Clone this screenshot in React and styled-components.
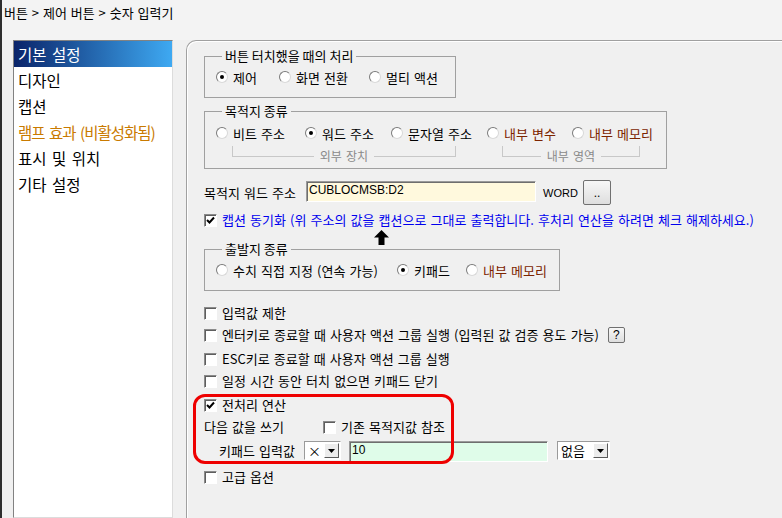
import React from 'react'
import styled, { createGlobalStyle } from 'styled-components'

const GlobalStyle = createGlobalStyle`
  html, body {
    margin: 0;
    padding: 0;
    background: #f0f0f0;
  }
  body {
    font-family: "Noto Sans CJK KR", "Noto Sans", sans-serif;
  }
`

const Window = styled.div`
  width: 782px;
  height: 518px;
  overflow: hidden;
  display: flex;
  flex-direction: column;
  box-sizing: border-box;
  border-left: 2px solid #2e2e2e;
  background: #f0f0f0;
  color: #000;
  font-family: "Noto Sans CJK KR", "Noto Sans", sans-serif;
  font-size: 12px;
  word-spacing: 1.5px;
`

const TopBar = styled.div`
  flex: none;
  height: 40px;
  box-sizing: border-box;
  padding: 4px 0 0 2px;
  background: #f3f3f3;
  font-size: 13px;
  line-height: 17px;
  word-spacing: 1px;
`

const Body = styled.div`
  flex: 1;
  display: flex;
  min-height: 0;
`

const Sidebar = styled.div`
  flex: none;
  width: 184px;
  box-sizing: border-box;
  padding-left: 11px;
`

const ListBox = styled.div`
  width: 160px;
  height: 100%;
  box-sizing: border-box;
  background: #fff;
  border: 1px solid;
  border-color: #828282 #dcdcdc #dcdcdc #828282;
`

const ListItem = styled.div`
  height: 26px;
  line-height: 26px;
  padding-left: 4px;
  font-size: 15.5px;
  word-spacing: 2px;
  letter-spacing: ${p => (p.$muted ? '-1px' : '0')};
  white-space: nowrap;
  color: ${p => (p.$selected ? '#fff' : p.$muted ? '#c97a00' : '#000')};
  background: ${p => (p.$selected ? 'linear-gradient(90deg, #0a246a, #3ea9f2)' : 'transparent')};
`

const Panel = styled.div`
  flex: 1;
  position: relative;
  display: flex;
  flex-direction: column;
  align-items: flex-start;
  box-sizing: border-box;
  padding: 8px 0 0 17px;
  border-top: 1px solid #a0a0a0;
  border-left: 1px solid #a0a0a0;
  border-top-left-radius: 10px;
  box-shadow: inset 1px 1px 0 #fff;
`

const Group = styled.fieldset`
  box-sizing: border-box;
  width: ${p => p.$w}px;
  min-width: 0;
  margin: ${p => p.$mt || 0}px 0 0 0;
  padding: ${p => p.$pt}px 6px ${p => p.$pb}px 11px;
  border: 1px solid #a0a0a0;
`

const Legend = styled.legend`
  margin-left: 6px;
  padding: 0 3px;
  font-size: 13px;
  line-height: 14px;
  word-spacing: 0;
`

const RadioRow = styled.div`
  display: flex;
  align-items: center;
  height: 16px;
`

const RadioItem = styled.div`
  flex: none;
  display: flex;
  align-items: center;
  gap: 5px;
  width: ${p => (p.$w ? `${p.$w}px` : 'auto')};
  white-space: nowrap;
  font-size: 13px;
  word-spacing: 1.2px;
  color: ${p => (p.$brown ? '#7c2400' : '#000')};
`

const RadioDot = styled.span`
  flex: none;
  width: 12px;
  height: 12px;
  box-sizing: border-box;
  border-radius: 50%;
  border: 1px solid;
  border-color: #7a7a7a #d8d8d8 #d8d8d8 #7a7a7a;
  background: #fff;
  display: flex;
  align-items: center;
  justify-content: center;

  &::after {
    content: '';
    width: 4px;
    height: 4px;
    border-radius: 50%;
    background: ${p => (p.$on ? '#000' : 'transparent')};
  }
`

const BracketRow = styled.div`
  display: flex;
  margin-top: 5px;
`

const Bracket = styled.div`
  display: grid;
  grid-template-columns: 1fr auto 1fr;
  width: ${p => p.$w}px;
  margin-left: ${p => p.$ml}px;
`

const BracketEdge = styled.div`
  height: 10px;
  border-bottom: 1px solid #c8c8c8;
  border-left: ${p => (p.$side === 'left' ? '1px solid #c8c8c8' : 'none')};
  border-right: ${p => (p.$side === 'right' ? '1px solid #c8c8c8' : 'none')};
`

const BracketLabel = styled.span`
  margin-top: 3px;
  padding: 0 6px;
  line-height: 14px;
  color: #8a8a8a;
`

const Row = styled.div`
  display: flex;
  align-items: ${p => p.$align || 'center'};
  height: ${p => p.$h || 16}px;
  margin-top: ${p => p.$mt || 0}px;
  margin-left: ${p => p.$ml || 0}px;
  white-space: nowrap;
`

const FieldLabel = styled.span`
  flex: none;
  width: ${p => (p.$w ? `${p.$w}px` : 'auto')};
  font-size: 13px;
  word-spacing: 1.2px;
  line-height: ${p => p.$lh || 16}px;
  color: ${p => (p.$blue ? '#0000ee' : '#000')};
`

const Sunken = styled.div`
  flex: none;
  box-sizing: border-box;
  width: ${p => p.$w}px;
  height: ${p => p.$h}px;
  margin-left: ${p => p.$ml || 0}px;
  margin-bottom: ${p => p.$mb || 0}px;
  padding-left: 2px;
  border: 1px solid;
  border-color: #9a9a9a #fff #fff #9a9a9a;
  box-shadow: inset 1px 1px 0 #6e6e6e;
  background: ${p => p.$bg};
  font-family: "Liberation Sans", Arial, sans-serif;
  font-size: 12px;
  line-height: ${p => p.$h - 4}px;
`

const UnitText = styled.span`
  flex: none;
  width: 40px;
  margin-left: 7px;
  font-family: "Liberation Sans", Arial, sans-serif;
  font-size: 11px;
`

const PushButton = styled.button`
  flex: none;
  box-sizing: border-box;
  width: ${p => p.$w}px;
  height: ${p => p.$h}px;
  margin: 0 0 0 ${p => p.$ml || 0}px;
  padding: 0;
  border: 1px solid #707070;
  border-radius: 2px;
  background: linear-gradient(#f7f7f7, #dedede);
  font-family: "Liberation Sans", Arial, sans-serif;
  font-size: 12px;
  color: #000;
  line-height: 1;
`

const CheckBoxFrame = styled.span`
  flex: none;
  width: 13px;
  height: 13px;
  box-sizing: border-box;
  border: 1px solid;
  border-color: #8a8a8a #fff #fff #8a8a8a;
  box-shadow: inset 1px 1px 0 #5e5e5e;
  background: #fff;
  display: flex;
  align-items: center;
  justify-content: center;
  margin-right: 5px;
  margin-left: ${p => p.$ml || 0}px;
`

const SelectBox = styled.div`
  flex: none;
  display: flex;
  align-items: center;
  justify-content: space-between;
  box-sizing: border-box;
  width: ${p => p.$w}px;
  height: 19px;
  margin-left: ${p => p.$ml || 0}px;
  padding: 0 1px 0 3px;
  border: 1px solid;
  border-color: #9a9a9a #fff #fff #9a9a9a;
  background: #fff;
  font-size: 13px;
  line-height: 17px;
`

const DropButton = styled.span`
  flex: none;
  width: 15px;
  height: 15px;
  box-sizing: border-box;
  border: 1px solid;
  border-color: #fff #5a5a5a #5a5a5a #fff;
  background: #ececec;
  display: flex;
  align-items: center;
  justify-content: center;
`

const Pointer = styled.svg`
  position: absolute;
  left: 187px;
  top: 189px;
`

const Highlight = styled.div`
  position: absolute;
  left: 6px;
  top: 353px;
  width: 261px;
  height: 70px;
  box-sizing: border-box;
  border: 3px solid #ee0000;
  border-radius: 12px;
  pointer-events: none;
`

const CheckBox = ({ checked, ml }) => (
  <CheckBoxFrame $ml={ml}>
    {checked && (
      <svg width="9" height="9" viewBox="0 0 9 9">
        <path d="M1 4 L3.5 6.5 L8 1.5" fill="none" stroke="#000" strokeWidth="2" />
      </svg>
    )}
  </CheckBoxFrame>
)

const Radio = ({ on, w, brown, children }) => (
  <RadioItem $w={w} $brown={brown}>
    <RadioDot $on={on} />
    {children}
  </RadioItem>
)

const Select = ({ w, ml, children }) => (
  <SelectBox $w={w} $ml={ml}>
    <span>{children}</span>
    <DropButton>
      <svg width="7" height="4" viewBox="0 0 7 4">
        <path d="M0 0 H7 L3.5 4 Z" fill="#000" />
      </svg>
    </DropButton>
  </SelectBox>
)

const menu = [
  { label: '기본 설정', selected: true },
  { label: '디자인' },
  { label: '캡션' },
  { label: '램프 효과 (비활성화됨)', muted: true },
  { label: '표시 및 위치' },
  { label: '기타 설정' },
]

const App = () => (
  <>
    <GlobalStyle />
    <Window>
      <TopBar>버튼 &gt; 제어 버튼 &gt; 숫자 입력기</TopBar>
      <Body>
        <Sidebar>
          <ListBox>
            {menu.map(item => (
              <ListItem key={item.label} $selected={item.selected} $muted={item.muted}>
                {item.label}
              </ListItem>
            ))}
          </ListBox>
        </Sidebar>

        <Panel>
          <Group $w={252} $pt={6} $pb={12}>
            <Legend>버튼 터치했을 때의 처리</Legend>
            <RadioRow>
              <Radio on w={63}>제어</Radio>
              <Radio w={90}>화면 전환</Radio>
              <Radio>멀티 액션</Radio>
            </RadioRow>
          </Group>

          <Group $w={463} $mt={6} $pt={7} $pb={5}>
            <Legend>목적지 종류</Legend>
            <RadioRow>
              <Radio w={89}>비트 주소</Radio>
              <Radio on w={86}>워드 주소</Radio>
              <Radio w={96}>문자열 주소</Radio>
              <Radio brown w={85}>내부 변수</Radio>
              <Radio brown>내부 메모리</Radio>
            </RadioRow>
            <BracketRow>
              <Bracket $w={224} $ml={16}>
                <BracketEdge $side="left" />
                <BracketLabel>외부 장치</BracketLabel>
                <BracketEdge $side="right" />
              </Bracket>
              <Bracket $w={138} $ml={46}>
                <BracketEdge $side="left" />
                <BracketLabel>내부 영역</BracketLabel>
                <BracketEdge $side="right" />
              </Bracket>
            </BracketRow>
          </Group>

          <Row $mt={11} $h={25}>
            <FieldLabel $w={102}>목적지 워드 주소</FieldLabel>
            <Sunken $w={230} $h={21} $bg="#fff9dd" $mb={2}>CUBLOCMSB:D2</Sunken>
            <UnitText>WORD</UnitText>
            <PushButton $w={28} $h={25}>..</PushButton>
          </Row>

          <Row $mt={7}>
            <CheckBox checked />
            <FieldLabel $blue>
              캡션 동기화 (위 주소의 값을 캡션으로 그대로 출력합니다. 후처리 연산을 하려면 체크 해제하세요.)
            </FieldLabel>
          </Row>

          <Group $w={356} $mt={14} $pt={6} $pb={12}>
            <Legend>출발지 종류</Legend>
            <RadioRow>
              <Radio w={181}>수치 직접 지정 (연속 가능)</Radio>
              <Radio on w={69}>키패드</Radio>
              <Radio brown>내부 메모리</Radio>
            </RadioRow>
          </Group>

          <Row $mt={14}>
            <CheckBox />
            <FieldLabel>입력값 제한</FieldLabel>
          </Row>
          <Row $mt={6}>
            <CheckBox />
            <FieldLabel>엔터키로 종료할 때 사용자 액션 그룹 실행 (입력된 값 검증 용도 가능)</FieldLabel>
            <PushButton $w={17} $h={16} $ml={9}>?</PushButton>
          </Row>
          <Row $mt={8}>
            <CheckBox />
            <FieldLabel>ESC키로 종료할 때 사용자 액션 그룹 실행</FieldLabel>
          </Row>
          <Row $mt={6}>
            <CheckBox />
            <FieldLabel>일정 시간 동안 터치 없으면 키패드 닫기</FieldLabel>
          </Row>
          <Row $mt={8}>
            <CheckBox checked />
            <FieldLabel>전처리 연산</FieldLabel>
          </Row>
          <Row $mt={6}>
            <FieldLabel $w={119}>다음 값을 쓰기</FieldLabel>
            <CheckBox />
            <FieldLabel>기존 목적지값 참조</FieldLabel>
          </Row>
          <Row $mt={6} $ml={15} $h={21} $align="flex-start">
            <FieldLabel $w={85} $lh={19}>키패드 입력값</FieldLabel>
            <Select w={37}>×</Select>
            <Sunken $w={199} $h={21} $ml={8} $bg="#dffce9">10</Sunken>
            <Select w={53} ml={9}>없음</Select>
          </Row>
          <Row $mt={7}>
            <CheckBox />
            <FieldLabel>고급 옵션</FieldLabel>
          </Row>

          <Pointer width="15" height="15" viewBox="0 0 15 15">
            <path d="M7.5 0 L15 7.5 H10.5 V15 H4.5 V7.5 H0 Z" fill="#000" />
          </Pointer>
          <Highlight />
        </Panel>
      </Body>
    </Window>
  </>
)

export default App
